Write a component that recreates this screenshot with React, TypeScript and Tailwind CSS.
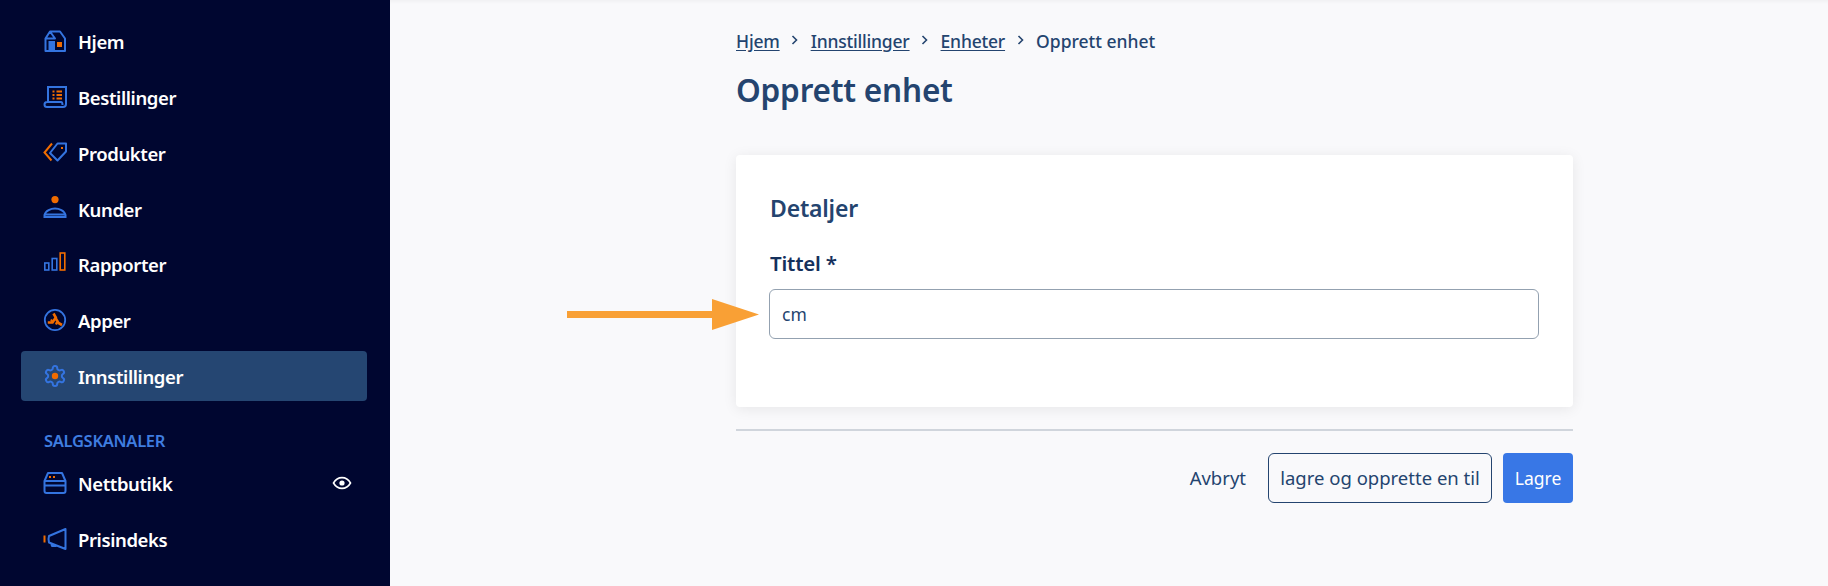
const B = "#3474e0";
const O = "#f06c00";

const HomeIcon = () => (
  <svg width="24" height="24" viewBox="0 0 24 24" fill="none" className="shrink-0">
    <path d="M2.5 9.5 L7 2.5 H17 L22 9.5 V22 H2.5 Z M2.5 9.5 H12 L7 2.5 M17 2.5 L22 9.5" stroke={B} strokeWidth="2" strokeLinejoin="round" />
    <path d="M6.5 22 V13 H11 V22" stroke={B} strokeWidth="2" fill={B} />
    <rect x="14" y="13" width="5" height="5" fill={O} />
  </svg>
);
const OrdersIcon = () => (
  <svg width="24" height="24" viewBox="0 0 24 24" fill="none" className="shrink-0">
    <path d="M5 17 V2 H23 V19 Q23 22 20 22 H4 Q1.5 22 1.5 19.5 Q1.5 17 4 17 H18 Q19.5 17 19.5 20" stroke={B} strokeWidth="2" />
    <path d="M9.5 6.5 h2 M13.5 6.5 h5.5 M9.5 10 h2 M13.5 10 h5.5 M9.5 13.5 h2 M13.5 13.5 h5.5" stroke={O} strokeWidth="2" />
  </svg>
);
const TagIcon = () => (
  <svg width="24" height="24" viewBox="0 0 24 24" fill="none" className="shrink-0">
    <path d="M9 2.5 L1.5 11.5 L8.5 19.5" stroke={O} strokeWidth="2" />
    <path d="M14.5 2.5 H23 V10.5 L14.5 19.5 L7 12 Z" stroke={B} strokeWidth="2" strokeLinejoin="round" />
    <rect x="18" y="6" width="2" height="2" fill={O} />
  </svg>
);
const UserIcon = () => (
  <svg width="24" height="24" viewBox="0 0 24 24" fill="none" className="shrink-0">
    <circle cx="12" cy="3.6" r="3.6" fill={O} />
    <path d="M1.5 21 V19 C2.5 14.5 8 12.5 12 12.5 C16 12.5 21.5 14.5 22.5 19 V21 Z M1.5 18.5 H22.5" stroke={B} strokeWidth="2" />
  </svg>
);
const ChartIcon = () => (
  <svg width="24" height="24" viewBox="0 0 24 24" fill="none" className="shrink-0">
    <rect x="1.8" y="11" width="4" height="7" stroke={B} strokeWidth="1.6" />
    <rect x="9.2" y="6.5" width="4.6" height="11.5" stroke={B} strokeWidth="1.6" />
    <rect x="17.2" y="1" width="4.6" height="17" stroke={O} strokeWidth="1.6" />
  </svg>
);
const AppsIcon = () => (
  <svg width="24" height="24" viewBox="0 0 24 24" fill="none" className="shrink-0">
    <circle cx="12" cy="12" r="10.2" stroke={B} strokeWidth="1.8" />
    <path d="M10.5 5.5 L12.8 9.5 L9.5 14.5 H4.8 M12.8 10.5 L15.5 15 L19 17" stroke={O} strokeWidth="2.6" />
    <path d="M8 11.5 L10 14.5 M14 14 L13 16.5" stroke={O} strokeWidth="2.2" />
  </svg>
);
const GearIcon = () => (
  <svg width="24" height="24" viewBox="0 0 24 24" fill="none" className="shrink-0">
    <path d="M12.22 2h-.44a2 2 0 0 0-2 2v.18a2 2 0 0 1-1 1.73l-.43.25a2 2 0 0 1-2 0l-.15-.08a2 2 0 0 0-2.73.73l-.22.38a2 2 0 0 0 .73 2.73l.15.1a2 2 0 0 1 1 1.72v.51a2 2 0 0 1-1 1.74l-.15.09a2 2 0 0 0-.73 2.73l.22.38a2 2 0 0 0 2.73.73l.15-.08a2 2 0 0 1 2 0l.43.25a2 2 0 0 1 1 1.73V20a2 2 0 0 0 2 2h.44a2 2 0 0 0 2-2v-.18a2 2 0 0 1 1-1.73l.43-.25a2 2 0 0 1 2 0l.15.08a2 2 0 0 0 2.73-.73l.22-.39a2 2 0 0 0-.73-2.73l-.15-.08a2 2 0 0 1-1-1.74v-.5a2 2 0 0 1 1-1.74l.15-.09a2 2 0 0 0 .73-2.73l-.22-.38a2 2 0 0 0-2.73-.73l-.15.08a2 2 0 0 1-2 0l-.43-.25a2 2 0 0 1-1-1.73V4a2 2 0 0 0-2-2z" stroke={B} strokeWidth="2" />
    <circle cx="12" cy="12" r="3.2" fill={O} />
  </svg>
);
const StoreIcon = () => (
  <svg width="24" height="24" viewBox="0 0 24 24" fill="none" className="shrink-0">
    <path d="M5 2 H19 L22.5 10 V20 Q22.5 22 20.5 22 H3.5 Q1.5 22 1.5 20 V10 Z M1.5 10 H22.5 M1.5 14.5 H22.5" stroke={B} strokeWidth="2" strokeLinejoin="round" />
    <rect x="6" y="5" width="2" height="2" fill={O} />
    <rect x="10" y="5" width="2" height="2" fill={O} />
  </svg>
);
const MegaphoneIcon = () => (
  <svg width="24" height="24" viewBox="0 0 24 24" fill="none" className="shrink-0">
    <rect x="0.5" y="8.5" width="2" height="7" fill={O} />
    <path d="M6 9 L22.5 2 V22 L6 15.5 Q5 12 6 9 Z M8 16 L9 19 H13 L12.5 18" stroke={B} strokeWidth="2" strokeLinejoin="round" />
  </svg>
);
const EyeIcon = () => (
  <svg width="20" height="20" viewBox="0 0 20 20" fill="none" className="shrink-0">
    <path d="M1.5 10 C3.5 6.5 6.5 4.6 10 4.6 C13.5 4.6 16.5 6.5 18.5 10 C16.5 13.5 13.5 15.4 10 15.4 C6.5 15.4 3.5 13.5 1.5 10 Z" stroke="#fff" strokeWidth="1.6" />
    <circle cx="10" cy="10" r="2.6" fill="#fff" />
  </svg>
);
const Chevron = () => (
  <svg width="8" height="12" viewBox="0 0 8 12" fill="none" className="mx-[11.5px] -mt-[3px] shrink-0">
    <path d="M1.5 2 L5.5 6 L1.5 10" stroke="#24446f" strokeWidth="1.6" />
  </svg>
);

function NavItem({ icon, label, active, extra }: { icon: React.ReactNode; label: string; active?: boolean; extra?: React.ReactNode }) {
  return (
    <div className={`flex items-center h-[50px] mb-[5.8px] ml-[21px] mr-[23px] pl-[22px] pr-[15px] gap-[11px] rounded-[4px] ${active ? "bg-[#254672]" : ""}`}>
      {icon}
      <span className="pt-[2px] text-[18.5px] font-semibold text-white flex-1 tracking-[-0.4px]">{label}</span>
      {extra}
    </div>
  );
}

export default function App() {
  return (
    <div className="relative flex h-[586px] w-[1828px] overflow-hidden bg-[#f9f9fb] font-['Noto_Sans','Open_Sans',sans-serif] text-[#24446f]">
      <aside className="w-[390px] shrink-0 bg-[#000630] pt-[16px]">
        <NavItem icon={<HomeIcon />} label="Hjem" />
        <NavItem icon={<OrdersIcon />} label="Bestillinger" />
        <NavItem icon={<TagIcon />} label="Produkter" />
        <NavItem icon={<UserIcon />} label="Kunder" />
        <NavItem icon={<ChartIcon />} label="Rapporter" />
        <NavItem icon={<AppsIcon />} label="Apper" />
        <NavItem icon={<GearIcon />} label="Innstillinger" active />
        <div className="mt-[28px] mb-[5px] pl-[44px] text-[16.5px] leading-[24px] font-semibold text-[#3f7de0] tracking-[-0.3px]">SALGSKANALER</div>
        <NavItem icon={<StoreIcon />} label="Nettbutikk" extra={<EyeIcon />} />
        <NavItem icon={<MegaphoneIcon />} label="Prisindeks" />
      </aside>

      <main className="flex-1 pl-[346px] shadow-[inset_0_4px_4px_-3px_rgba(0,0,0,0.05)]">
        <div className="w-[837px]">
          <nav className="flex items-center h-[24px] mt-[29px] text-[17.5px] font-medium tracking-[-0.2px]">
            <span className="underline underline-offset-2">Hjem</span>
            <Chevron />
            <span className="underline underline-offset-2">Innstillinger</span>
            <Chevron />
            <span className="underline underline-offset-2">Enheter</span>
            <Chevron />
            <span className="tracking-[0px]">Opprett enhet</span>
          </nav>
          <h1 className="mt-[15px] text-[31.5px] leading-[44px] font-semibold tracking-[-0.2px]">Opprett enhet</h1>

          <section className="mt-[43px] h-[252px] rounded-[4px] bg-white px-[34px] pt-[38px] shadow-[0_2px_14px_rgba(0,0,0,0.08)]">
            <h2 className="text-[23px] leading-[30px] font-semibold tracking-[-0.2px]">Detaljer</h2>
            <div className="mt-[27px] text-[20.5px] leading-[26px] font-semibold text-[#14305c] tracking-[-0.2px]">Tittel *</div>
            <div className="mt-[13px] -ml-[1px] flex items-center h-[50px] w-[770px] rounded-[6px] border border-[#93a1b0] bg-white pl-[12px] text-[17.5px] text-[#24446f]">cm</div>
          </section>

          <div className="mt-[22px] border-t-2 border-[#d0d5dc]" />

          <div className="mt-[22px] flex items-center justify-end">
            <span className="mr-[22px] text-[18.5px]">Avbryt</span>
            <div className="flex items-center justify-center h-[50px] w-[224px] rounded-[6px] border border-[#24446f] text-[18.5px]">lagre og opprette en til</div>
            <div className="ml-[11px] flex items-center justify-center h-[50px] w-[70px] rounded-[4px] bg-[#3877e6] text-[17.5px] text-white">Lagre</div>
          </div>
        </div>
      </main>

      <svg width="194" height="34" viewBox="0 0 194 34" className="absolute left-[566px] top-[298px]">
        <rect x="1" y="13" width="146" height="7" fill="#f9a035" />
        <polygon points="146,1 193,16.5 146,32" fill="#f9a035" />
      </svg>
    </div>
  );
}
